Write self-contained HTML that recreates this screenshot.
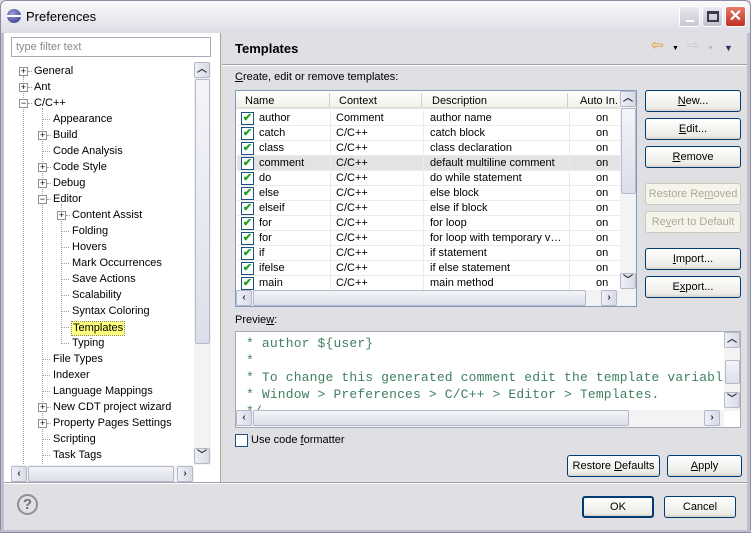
<!DOCTYPE html>
<html><head><meta charset="utf-8"><style>
*{margin:0;padding:0;box-sizing:border-box}
body{width:751px;height:533px;overflow:hidden;background:#e0dfe3;font:11px "Liberation Sans",sans-serif;color:#000;position:relative}
.a{position:absolute}
.t{position:absolute;white-space:nowrap;line-height:13px}
.btn{position:absolute;border:1px solid #003c74;border-radius:3px;background:linear-gradient(#fff,#ecebe6 85%,#d6d0c5);text-align:center;line-height:20px;font-size:11px}
.btn.dis{border-color:#c9c7ba;color:#acaa99;background:#f5f4ea}
.sb{position:absolute;background:#f3f3f5}
.arr{position:absolute;width:16px;height:16px;border:1px solid #b4b8c8;border-radius:2px;background:linear-gradient(90deg,#eef0f8,#d8dbe6);font-size:10px;font-weight:bold;text-align:center;line-height:14px;color:#333}
.thumb{position:absolute;border:1px solid #b4b8c8;border-radius:2px;background:linear-gradient(#f4f5fa,#dcdfea)}
.pm{position:absolute;width:9px;height:9px;border:1px solid #919191;background:#fff;font-size:9px;line-height:7px;text-align:center;color:#000}
.cb{position:absolute;width:13px;height:13px;border:1px solid #1c5180;background:#fff;color:#21a121;font-size:11px;line-height:11px;text-align:center;font-weight:bold}
.row{position:absolute;left:237px;width:383px;height:15px;border-bottom:1px solid #ecebe8}
</style></head><body>
<div class="a" style="left:0;top:0;width:751px;height:33px;background:linear-gradient(#fafafc,#dcdce4);border:1px solid #8c8ca0;border-bottom:none;border-radius:6px 6px 0 0"></div>
<div class="a" style="left:7px;top:9px;width:14px;height:14px;border-radius:50%;background:radial-gradient(circle at 40% 35%,#9aa0e0,#2c2f7a);"></div>
<div class="a" style="left:7px;top:15px;width:14px;height:2px;background:#fff"></div>
<div class="t" style="left:26px;top:10px;font-size:13px;color:#000">Preferences</div>
<div class="a" style="left:679px;top:6px;width:21px;height:21px;border:1px solid #fff;border-radius:3px;background:linear-gradient(#e8e8f0,#c8c8d4)"><div class="a" style="left:6px;top:13px;width:8px;height:2px;background:#fff"></div></div>
<div class="a" style="left:702px;top:6px;width:21px;height:21px;border:1px solid #fff;border-radius:3px;background:linear-gradient(#e8e8f0,#c0c0d0)"><div class="a" style="left:4px;top:4px;width:12px;height:11px;border:2px solid #3a3a4a;border-top-width:3px"></div></div>
<div class="a" style="left:725px;top:6px;width:21px;height:21px;border:1px solid #fff;border-radius:3px;background:linear-gradient(#e87a6a,#c03020);color:#fff;font:bold 16px 'Liberation Sans';text-align:center;line-height:19px">✕</div>
<div class="a" style="left:0;top:33px;width:4px;height:500px;background:#c0c0cc;border-left:1px solid #8c8ca0"></div>
<div class="a" style="right:0;top:33px;width:4px;height:500px;background:#c0c0cc;border-right:1px solid #8c8ca0"></div>
<div class="a" style="left:0;bottom:0;width:751px;height:3px;background:#c0c0cc;border-bottom:1px solid #8c8ca0"></div>

<div class="a" style="left:4px;top:33px;width:217px;height:449px;background:#fff;border-right:1px solid #aca899"></div>
<div class="a" style="left:11px;top:37px;width:200px;height:20px;border:1px solid #a5acb5;background:#fff"></div>
<div class="t" style="left:16px;top:41px;color:#8a8a8a">type filter text</div>
<div class="a" style="left:23px;top:76px;height:390px;border-left:1px dotted #a0a0a0"></div>
<div class="a" style="left:42px;top:108px;height:358px;border-left:1px dotted #a0a0a0"></div>
<div class="a" style="left:61px;top:204px;height:140px;border-left:1px dotted #a0a0a0"></div>
<div id="tree"></div>
<div class="sb" style="left:194px;top:62px;width:17px;height:403px"></div>
<div class="arr" style="left:194px;top:62px">︿</div>
<div class="thumb" style="left:195px;top:79px;width:15px;height:265px"></div>
<div class="arr" style="left:194px;top:448px">﹀</div>
<div class="sb" style="left:11px;top:465px;width:183px;height:17px"></div>
<div class="arr" style="left:11px;top:466px">‹</div>
<div class="thumb" style="left:28px;top:466px;width:146px;height:16px"></div>
<div class="arr" style="left:177px;top:466px">›</div>

<div class="t" style="left:235px;top:42px;font-size:13px;font-weight:bold">Templates</div>
<div class="t" style="left:651px;top:39px;font-size:15px;color:#e0a020">⇦</div>
<div class="t" style="left:672px;top:42px;font-size:7px">▼</div>
<div class="t" style="left:687px;top:39px;font-size:15px;color:#ccc">⇨</div>
<div class="t" style="left:707px;top:42px;font-size:7px;color:#bbb">▼</div>
<div class="t" style="left:724px;top:42px;font-size:9px;color:#303060">▼</div>
<div class="a" style="left:222px;top:64px;width:525px;height:2px;border-top:1px solid #a0a0a8;border-bottom:1px solid #fff"></div>
<div class="t" style="left:235px;top:71px"><u>C</u>reate, edit or remove templates:</div>

<div class="a" style="left:235px;top:90px;width:402px;height:217px;border:1px solid #7f9db9;background:#fff"></div>
<div class="a" style="left:236px;top:91px;width:384px;height:18px;background:linear-gradient(#fff,#f2f1ea);border-bottom:2px solid #e2e2da"></div>
<div class="t" style="left:245px;top:95px">Name</div>
<div class="t" style="left:339px;top:95px">Context</div>
<div class="t" style="left:432px;top:95px">Description</div>
<div class="t" style="left:580px;top:95px">Auto In.</div>
<div class="a" style="left:329px;top:93px;width:1px;height:14px;background:#d0d0c8"></div>
<div class="a" style="left:421px;top:93px;width:1px;height:14px;background:#d0d0c8"></div>
<div class="a" style="left:567px;top:93px;width:1px;height:14px;background:#d0d0c8"></div>
<div id="rows"></div>
<div class="sb" style="left:620px;top:91px;width:16px;height:199px"></div>
<div class="arr" style="left:620px;top:91px">︿</div>
<div class="thumb" style="left:621px;top:108px;width:15px;height:86px"></div>
<div class="arr" style="left:620px;top:273px">﹀</div>
<div class="sb" style="left:236px;top:290px;width:400px;height:16px"></div>
<div class="arr" style="left:236px;top:290px">‹</div>
<div class="thumb" style="left:253px;top:290px;width:333px;height:16px"></div>
<div class="arr" style="left:601px;top:290px">›</div>

<div class="btn" style="left:645px;top:90px;width:96px;height:22px"><u>N</u>ew...</div>
<div class="btn" style="left:645px;top:118px;width:96px;height:22px"><u>E</u>dit...</div>
<div class="btn" style="left:645px;top:146px;width:96px;height:22px"><u>R</u>emove</div>
<div class="btn dis" style="left:645px;top:183px;width:96px;height:22px">Restore Re<u>m</u>oved</div>
<div class="btn dis" style="left:645px;top:211px;width:96px;height:22px">Re<u>v</u>ert to Default</div>
<div class="btn" style="left:645px;top:248px;width:96px;height:22px"><u>I</u>mport...</div>
<div class="btn" style="left:645px;top:276px;width:96px;height:22px">E<u>x</u>port...</div>

<div class="t" style="left:235px;top:314px">Previe<u>w</u>:</div>
<div class="a" style="left:235px;top:331px;width:506px;height:97px;border:1px solid #a5acb5;background:#fff;overflow:hidden">
<pre style="position:absolute;left:10px;top:3px;font:13px 'Liberation Mono',monospace;letter-spacing:0.15px;color:#3f7f5f;line-height:17px">* author ${user}
*
* To change this generated comment edit the template variabl
* Window &gt; Preferences &gt; C/C++ &gt; Editor &gt; Templates.
*/</pre></div>
<div class="sb" style="left:724px;top:332px;width:16px;height:79px"></div>
<div class="arr" style="left:724px;top:332px">︿</div>
<div class="thumb" style="left:725px;top:360px;width:15px;height:24px"></div>
<div class="arr" style="left:724px;top:392px">﹀</div>
<div class="sb" style="left:236px;top:410px;width:488px;height:17px"></div>
<div class="arr" style="left:236px;top:410px">‹</div>
<div class="thumb" style="left:253px;top:410px;width:376px;height:16px"></div>
<div class="arr" style="left:704px;top:410px">›</div>

<div class="a" style="left:235px;top:434px;width:13px;height:13px;border:1px solid #1c5180;background:#fff"></div>
<div class="t" style="left:251px;top:434px">Use code <u>f</u>ormatter</div>
<div class="btn" style="left:567px;top:455px;width:93px;height:22px">Restore <u>D</u>efaults</div>
<div class="btn" style="left:667px;top:455px;width:75px;height:22px"><u>A</u>pply</div>

<div class="a" style="left:4px;top:482px;width:743px;height:2px;border-top:1px solid #a0a0a8;border-bottom:1px solid #fff"></div>
<div class="a" style="left:17px;top:494px;width:21px;height:21px;border:2px solid #8d8f99;border-radius:50%;color:#70727c;font:bold 15px 'Liberation Sans';text-align:center;line-height:17px">?</div>
<div class="btn" style="left:582px;top:496px;width:72px;height:22px;border-width:2px;line-height:18px">OK</div>
<div class="btn" style="left:664px;top:496px;width:72px;height:22px">Cancel</div>

<script>
var tree=[[0,1,'General'],[0,1,'Ant'],[0,2,'C/C++'],[1,0,'Appearance'],[1,1,'Build'],[1,0,'Code Analysis'],[1,1,'Code Style'],[1,1,'Debug'],[1,2,'Editor'],[2,1,'Content Assist'],[2,0,'Folding'],[2,0,'Hovers'],[2,0,'Mark Occurrences'],[2,0,'Save Actions'],[2,0,'Scalability'],[2,0,'Syntax Coloring'],[2,0,'Templates'],[2,0,'Typing'],[1,0,'File Types'],[1,0,'Indexer'],[1,0,'Language Mappings'],[1,1,'New CDT project wizard'],[1,1,'Property Pages Settings'],[1,0,'Scripting'],[1,0,'Task Tags']];
var h='';
tree.forEach(function(r,i){var y=65+i*16,tx=34+r[0]*19,px=19+r[0]*19;
if(r[1])h+='<div class="pm" style="left:'+px+'px;top:'+(y+2)+'px">'+(r[1]==1?'+':'−')+'</div>';
else h+='<div class="a" style="left:'+(px+4)+'px;top:'+(y+6)+'px;width:8px;border-top:1px dotted #a0a0a0"></div>';
if(r[1])h+='<div class="a" style="left:'+(px+9)+'px;top:'+(y+6)+'px;width:4px;border-top:1px dotted #a0a0a0"></div>';
var sel=r[2]=='Templates';
h+='<div class="t" style="left:'+(tx-(sel?1:0))+'px;top:'+(y)+'px;'+(sel?'background:#ffff80;border:1px dotted #888;padding:0 1px;':'')+'">'+r[2]+'</div>';});
document.getElementById('tree').innerHTML=h;
var rows=[['author','Comment','author name'],['catch','C/C++','catch block'],['class','C/C++','class declaration'],['comment','C/C++','default multiline comment'],['do','C/C++','do while statement'],['else','C/C++','else block'],['elseif','C/C++','else if block'],['for','C/C++','for loop'],['for','C/C++','for loop with temporary v…'],['if','C/C++','if statement'],['ifelse','C/C++','if else statement'],['main','C/C++','main method']];
h='';
rows.forEach(function(r,i){var y=111+i*15;
h+='<div class="row" style="top:'+y+'px;'+(i==3?'background:#e3e3e6;':'')+'"></div>';
h+='<div class="cb" style="left:241px;top:'+(y+1)+'px">✔</div>';
h+='<div class="t" style="left:259px;top:'+(y+1)+'px">'+r[0]+'</div>';
h+='<div class="t" style="left:336px;top:'+(y+1)+'px">'+r[1]+'</div>';
h+='<div class="t" style="left:430px;top:'+(y+1)+'px">'+r[2]+'</div>';
h+='<div class="t" style="left:596px;top:'+(y+1)+'px">on</div>';
});
h+='<div class="a" style="left:330px;top:111px;width:1px;height:179px;background:#ecebe8"></div><div class="a" style="left:423px;top:111px;width:1px;height:179px;background:#ecebe8"></div><div class="a" style="left:569px;top:111px;width:1px;height:179px;background:#ecebe8"></div>';
document.getElementById('rows').innerHTML=h;
</script>
</body></html>
